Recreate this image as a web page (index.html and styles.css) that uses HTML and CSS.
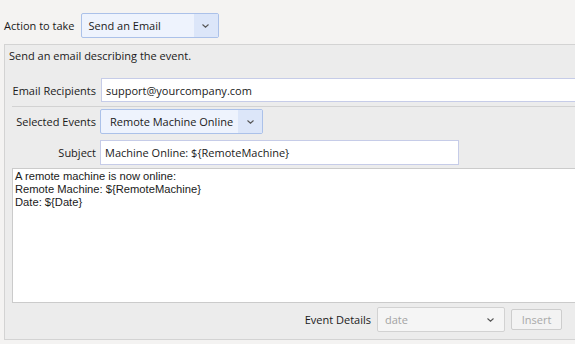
FILE: index.html
```html
<!DOCTYPE html>
<html>
<head>
<meta charset="utf-8">
<link rel="stylesheet" href="styles.css">
</head>
<body>
<div class="top">
  <span class="lbl">Action to take</span>
  <div class="select blue action">
    <span class="val">Send an Email</span>
    <span class="arrow"><svg width="7" height="4" viewBox="0 0 7 4"><path d="M0.5 0.5 L3.5 3.2 L6.5 0.5" fill="none" stroke="#555" stroke-width="1.1"/></svg></span>
  </div>
</div>
<div class="panel">
  <div class="desc">Send an email describing the event.</div>
  <div class="form">
    <div class="row">
      <span class="flabel">Email Recipients</span>
      <div class="input wide email">support@yourcompany.com</div>
    </div>
    <div class="sep"></div>
    <div class="row sel-row">
      <span class="flabel">Selected Events</span>
      <div class="select blue events">
        <span class="val">Remote Machine Online</span>
        <span class="arrow"><svg width="7" height="4" viewBox="0 0 7 4"><path d="M0.5 0.5 L3.5 3.2 L6.5 0.5" fill="none" stroke="#555" stroke-width="1.1"/></svg></span>
      </div>
    </div>
    <div class="row subj-row">
      <span class="flabel">Subject</span>
      <div class="input subject">Machine Online: ${RemoteMachine}</div>
    </div>
    <div class="textarea">
      <div class="tline">A remote machine is now online:</div>
      <div class="tline">Remote Machine: ${RemoteMachine}</div>
      <div class="tline">Date: ${Date}</div>
    </div>
    <div class="bottom">
      <span class="blabel">Event Details</span>
      <div class="select disabled details">
        <span class="val">date</span>
        <span class="arrow"><svg width="7" height="4" viewBox="0 0 7 4"><path d="M0.5 0.5 L3.5 3.2 L6.5 0.5" fill="none" stroke="#555" stroke-width="1.1"/></svg></span>
      </div>
      <div class="btn">Insert</div>
    </div>
  </div>
</div>
</body>
</html>
```
FILE: styles.css
```css
html, body {
  margin: 0;
  padding: 0;
}
body {
  width: 575px;
  height: 344px;
  overflow: hidden;
  background: #f4f3f2;
  font-family: "Open Sans", "DejaVu Sans", sans-serif;
  font-size: 11px;
  color: #1a1a1a;
}
.top {
  display: flex;
  align-items: center;
  padding: 13px 0 0 4px;
  height: 25px;
}
.lbl {
  margin-right: 6px;
}
.select {
  box-sizing: border-box;
  display: flex;
  align-items: stretch;
  height: 25px;
  border-radius: 2px;
}
.select .val {
  flex: 1;
  display: flex;
  align-items: center;
}
.select .arrow {
  display: flex;
  align-items: center;
  justify-content: center;
}
.select.blue {
  border: 1px solid #abc1e9;
  background: #eef3fd;
}
.select.blue .arrow {
  width: 24px;
  background: #dce6f9;
}
.select.action {
  width: 138px;
}
.select.action .val {
  padding-left: 7px;
}
.select.events {
  width: 163px;
}
.select.events .val {
  padding-left: 9px;
}
.panel {
  box-sizing: border-box;
  width: 571px;
  margin: 6px 0 0 4px;
  border: 1px solid #d3d3d3;
  border-right: none;
  background: #ececec;
  padding: 0 0 7px 4px;
  overflow: hidden;
}
.desc {
  height: 22px;
  line-height: 22px;
  margin-bottom: 11px;
}
.form {
  margin-left: 3px;
}
.row {
  display: flex;
  align-items: center;
}
.flabel {
  width: 84px;
  text-align: right;
  margin-right: 4px;
  flex: none;
}
.input {
  box-sizing: border-box;
  background: #fff;
  border: 1px solid #c6cce8;
  display: flex;
  align-items: center;
  padding-left: 4px;
}
.input.email {
  flex: 1;
  height: 24px;
  margin-left: 1px;
  margin-right: -3px;
}
.sep {
  height: 1px;
  background: #d2d2d2;
  margin-top: 4px;
  margin-bottom: 2px;
}
.subj-row {
  margin-top: 6px;
}
.input.subject {
  width: 359px;
  height: 25px;
}
.textarea {
  box-sizing: border-box;
  height: 135px;
  margin-top: 3px;
  margin-right: -3px;
  background: #fff;
  border: 1px solid #cbcbcb;
  padding: 1px 2px;
}
.tline {
  height: 13px;
  line-height: 13px;
  font-family: "Liberation Sans", "Open Sans", sans-serif;
  font-size: 11.2px;
}
.bottom {
  display: flex;
  align-items: center;
  justify-content: flex-end;
  margin-top: 4px;
  height: 25px;
  padding-right: 13px;
}
.blabel {
  margin-right: 6px;
}
.select.disabled {
  width: 128px;
  border: 1px solid #d2d2d2;
  background: #f5f5f5;
  color: #a3a3a3;
}
.select.disabled .val {
  padding-left: 7px;
}
.select.disabled .arrow {
  width: 28px;
}
.btn {
  box-sizing: border-box;
  width: 51px;
  height: 21px;
  margin-left: 6px;
  border: 1px solid #cdcdcd;
  border-radius: 2px;
  background: #f3f3f3;
  color: #a8a8a8;
  display: flex;
  align-items: center;
  justify-content: center;
}
```
